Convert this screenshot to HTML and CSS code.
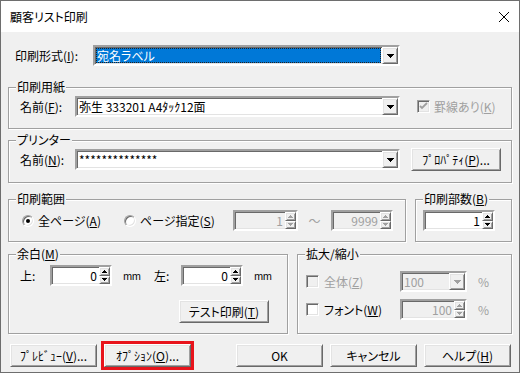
FILE: index.html
```html
<!DOCTYPE html>
<html lang="ja">
<head>
    <meta charset="UTF-8">
    <meta name="viewport" content="width=device-width, initial-scale=1.0">
    <title>顧客リスト印刷</title>
    <link rel="stylesheet" href="styles.css">
</head>
<body>
<div class="window">
    <!-- タイトルバー -->
    <div class="titlebar">
        <span class="title">顧客リスト印刷</span>
        <span class="close">
            <svg width="10" height="10" viewBox="0 0 10 10"><path d="M0 0L10 10M10 0L0 10" stroke="#000" stroke-width="1"/></svg>
        </span>
    </div>

    <div class="content">
        <!-- 印刷形式 -->
        <div class="top-row">
            <span class="form-label">印刷形式(<u>I</u>):</span>
            <div class="field combo combo-format">
                <span class="combo-text selected">宛名ラベル</span>
                <span class="raised drop-btn"><svg width="7" height="4" viewBox="0 0 7 4"><path d="M0 0h7v1h-1v1h-1v1h-1v1h-1v-1h-1v-1h-1v-1h-1z"/></svg></span>
            </div>
        </div>

        <!-- 印刷用紙 -->
        <div class="group group-paper">
            <div class="group-title">印刷用紙</div>
            <div class="group-row paper-row">
                <span class="name-label">名前(<u>F</u>):</span>
                <div class="field combo combo-name">
                    <span class="combo-text">弥生 333201 A4ﾀｯｸ12面</span>
                    <span class="raised drop-btn"><svg width="7" height="4" viewBox="0 0 7 4"><path d="M0 0h7v1h-1v1h-1v1h-1v1h-1v-1h-1v-1h-1v-1h-1z"/></svg></span>
                </div>
                <span class="check-item disabled ruled">
                    <span class="checkbox"><svg width="9" height="9" viewBox="0 0 9 9"><path d="M1 4l2 2l5 -5" fill="none" stroke="#a0a0a0" stroke-width="1.8"/></svg></span>
                    罫線あり(<u>K</u>)
                </span>
            </div>
        </div>

        <!-- プリンター -->
        <div class="group group-printer">
            <div class="group-title">プリンター</div>
            <div class="group-row printer-row">
                <span class="name-label">名前(<u>N</u>):</span>
                <div class="field combo combo-name">
                    <span class="combo-text">**************</span>
                    <span class="raised drop-btn"><svg width="7" height="4" viewBox="0 0 7 4"><path d="M0 0h7v1h-1v1h-1v1h-1v1h-1v-1h-1v-1h-1v-1h-1z"/></svg></span>
                </div>
                <span class="raised btn btn-property">ﾌﾟﾛﾊﾟﾃｨ(<u>P</u>)...</span>
            </div>
        </div>

        <!-- 印刷範囲 / 印刷部数 -->
        <div class="group-line range-line">
            <div class="group group-range">
                <div class="group-title">印刷範囲</div>
                <div class="group-row range-row">
                    <span class="radio-item radio-all"><span class="radio on"></span>全ページ(<u>A</u>)</span>
                    <span class="radio-item radio-page"><span class="radio"></span>ページ指定(<u>S</u>)</span>
                    <div class="field spin disabled spin-from">
                        <span class="spin-text">1</span>
                        <span class="spin-btns">
                            <span class="raised spin-btn"><svg width="5" height="3" viewBox="0 0 5 3"><path d="M2 0h1v1h1v1h1v1h-5v-1h1v-1h1z"/></svg></span>
                            <span class="raised spin-btn"><svg width="5" height="3" viewBox="0 0 5 3"><path d="M0 0h5v1h-1v1h-1v1h-1v-1h-1v-1h-1z"/></svg></span>
                        </span>
                    </div>
                    <span class="tilde">〜</span>
                    <div class="field spin disabled spin-to">
                        <span class="spin-text">9999</span>
                        <span class="spin-btns">
                            <span class="raised spin-btn"><svg width="5" height="3" viewBox="0 0 5 3"><path d="M2 0h1v1h1v1h1v1h-5v-1h1v-1h1z"/></svg></span>
                            <span class="raised spin-btn"><svg width="5" height="3" viewBox="0 0 5 3"><path d="M0 0h5v1h-1v1h-1v1h-1v-1h-1v-1h-1z"/></svg></span>
                        </span>
                    </div>
                </div>
            </div>
            <div class="group group-copies">
                <div class="group-title">印刷部数(<u>B</u>)</div>
                <div class="group-row copies-row">
                    <div class="field spin spin-copies">
                        <span class="spin-text">1</span>
                        <span class="spin-btns">
                            <span class="raised spin-btn"><svg width="5" height="3" viewBox="0 0 5 3"><path d="M2 0h1v1h1v1h1v1h-5v-1h1v-1h1z"/></svg></span>
                            <span class="raised spin-btn"><svg width="5" height="3" viewBox="0 0 5 3"><path d="M0 0h5v1h-1v1h-1v1h-1v-1h-1v-1h-1z"/></svg></span>
                        </span>
                    </div>
                </div>
            </div>
        </div>

        <!-- 余白 / 拡大縮小 -->
        <div class="group-line margin-line">
            <div class="group group-margin">
                <div class="group-title">余白(<u>M</u>)</div>
                <div class="group-row margin-row">
                    <span class="side-label top-label">上:</span>
                    <div class="field spin spin-margin">
                        <span class="spin-text">0</span>
                        <span class="spin-btns">
                            <span class="raised spin-btn"><svg width="5" height="3" viewBox="0 0 5 3"><path d="M2 0h1v1h1v1h1v1h-5v-1h1v-1h1z"/></svg></span>
                            <span class="raised spin-btn"><svg width="5" height="3" viewBox="0 0 5 3"><path d="M0 0h5v1h-1v1h-1v1h-1v-1h-1v-1h-1z"/></svg></span>
                        </span>
                    </div>
                    <span class="unit">mm</span>
                    <span class="side-label left-label">左:</span>
                    <div class="field spin spin-margin">
                        <span class="spin-text">0</span>
                        <span class="spin-btns">
                            <span class="raised spin-btn"><svg width="5" height="3" viewBox="0 0 5 3"><path d="M2 0h1v1h1v1h1v1h-5v-1h1v-1h1z"/></svg></span>
                            <span class="raised spin-btn"><svg width="5" height="3" viewBox="0 0 5 3"><path d="M0 0h5v1h-1v1h-1v1h-1v-1h-1v-1h-1z"/></svg></span>
                        </span>
                    </div>
                    <span class="unit">mm</span>
                </div>
                <span class="raised btn btn-test">テスト印刷(<u>T</u>)</span>
            </div>
            <div class="group group-scale">
                <div class="group-title">拡大/縮小</div>
                <div class="group-row scale-row">
                    <span class="check-item disabled scale-check"><span class="checkbox"></span>全体(<u>Z</u>)</span>
                    <div class="field combo disabled combo-scale">
                        <span class="combo-text">100</span>
                        <span class="raised drop-btn"><svg width="7" height="4" viewBox="0 0 7 4"><path d="M0 0h7v1h-1v1h-1v1h-1v1h-1v-1h-1v-1h-1v-1h-1z"/></svg></span>
                    </div>
                    <span class="percent">%</span>
                </div>
                <div class="group-row scale-row font-row">
                    <span class="check-item scale-check"><span class="checkbox"></span>フォント(<u>W</u>)</span>
                    <div class="field spin disabled spin-scale">
                        <span class="spin-text">100</span>
                        <span class="spin-btns">
                            <span class="raised spin-btn"><svg width="5" height="3" viewBox="0 0 5 3"><path d="M2 0h1v1h1v1h1v1h-5v-1h1v-1h1z"/></svg></span>
                            <span class="raised spin-btn"><svg width="5" height="3" viewBox="0 0 5 3"><path d="M0 0h5v1h-1v1h-1v1h-1v-1h-1v-1h-1z"/></svg></span>
                        </span>
                    </div>
                    <span class="percent">%</span>
                </div>
            </div>
        </div>

        <!-- ボタン -->
        <div class="button-bar">
            <span class="raised btn">ﾌﾟﾚﾋﾞｭｰ(<u>V</u>)...</span>
            <span class="raised btn btn-option">ｵﾌﾟｼｮﾝ(<u>O</u>)...</span>
            <span class="raised btn btn-ok">OK</span>
            <span class="raised btn">キャンセル</span>
            <span class="raised btn">ヘルプ(<u>H</u>)</span>
        </div>
    </div>
</div>
</body>
</html>
```

FILE: styles.css
```css
/* 基本スタイル */
* {
    box-sizing: border-box;
}

body {
    margin: 0;
    font-family: "Noto Sans CJK JP", "Noto Sans", sans-serif;
    font-size: 12px;
    line-height: 14px;
    color: #000;
    font-feature-settings: "palt";
    background: #fff;
}

u {
    text-decoration: underline;
    text-underline-offset: 1px;
}

.window {
    width: 520px;
    height: 373px;
    border: 1px solid #6e6e6e;
    background: #f0f0f0;
    display: flex;
    flex-direction: column;
}

/* タイトルバー */
.titlebar {
    height: 31px;
    flex-shrink: 0;
    background: #fff;
    display: flex;
    align-items: center;
    padding-left: 9px;
}

.close {
    margin-left: auto;
    width: 30px;
    height: 31px;
    display: flex;
    align-items: center;
    justify-content: center;
}

.content {
    padding: 13px 7px 0;
}

/* 3D 枠 */
.raised {
    background: #f0f0f0;
    border: 1px solid;
    border-color: #fff #696969 #696969 #fff;
    box-shadow: inset 1px 1px #e3e3e3, inset -1px -1px #a0a0a0;
}

.field {
    height: 21px;
    background: #fff;
    border: 2px solid;
    border-color: #a0a0a0 #fff #fff #a0a0a0;
    box-shadow: inset 1px 1px #696969, inset -1px -1px #e3e3e3;
    display: flex;
    align-items: stretch;
    flex-shrink: 0;
}

.field.disabled {
    background: #f0f0f0;
    color: #a0a0a0;
}

.field.disabled svg {
    fill: #a0a0a0;
}

/* コンボボックス */
.combo-text {
    flex: 1;
    display: flex;
    align-items: center;
    padding-left: 2px;
    white-space: nowrap;
    overflow: hidden;
}

.combo-text.selected {
    margin: 1px;
    padding-left: 1px;
    background: #0078d7;
    color: #fff;
    outline: 1px dotted #222;
    outline-offset: -1px;
}

.drop-btn {
    width: 16px;
    display: flex;
    align-items: center;
    justify-content: center;
}

/* スピン */
.spin-text {
    flex: 1;
    display: flex;
    align-items: center;
    justify-content: flex-end;
    padding-right: 2px;
}

.spin-btns {
    width: 11px;
    display: flex;
    flex-direction: column;
}

.spin-btn {
    flex: 1;
    display: flex;
    align-items: center;
    justify-content: center;
}

/* ボタン */
.btn {
    height: 23px;
    width: 87px;
    display: flex;
    align-items: center;
    justify-content: center;
    white-space: nowrap;
    flex-shrink: 0;
}

/* チェックボックス・ラジオ */
.check-item {
    display: flex;
    align-items: center;
    white-space: nowrap;
}

.check-item.disabled {
    color: #a0a0a0;
}

.checkbox {
    width: 13px;
    height: 13px;
    margin-right: 5px;
    background: #fff;
    border: 1px solid;
    border-color: #a0a0a0 #fff #fff #a0a0a0;
    box-shadow: inset 1px 1px #696969, inset -1px -1px #e3e3e3;
    display: flex;
    align-items: center;
    justify-content: center;
}

.check-item.disabled .checkbox {
    background: #f0f0f0;
}

.radio-item {
    display: flex;
    align-items: center;
    white-space: nowrap;
}

.radio {
    width: 12px;
    height: 12px;
    margin-right: 4px;
    border-radius: 50%;
    background: #fff;
    border: 1px solid;
    border-color: #a0a0a0 #fff #fff #a0a0a0;
    box-shadow: inset 1px 1px #696969, inset -1px -1px #e3e3e3;
    display: flex;
    align-items: center;
    justify-content: center;
}

.radio.on::after {
    content: "";
    width: 4px;
    height: 4px;
    border-radius: 50%;
    background: #000;
}

/* 上段 */
.top-row {
    display: flex;
    align-items: center;
    padding-left: 7px;
}

.form-label {
    width: 78px;
}

.combo-format {
    width: 307px;
}

/* グループボックス */
.group {
    border: 1px solid #a0a0a0;
    box-shadow: inset 1px 1px #fff, 1px 1px #fff;
    flex-shrink: 0;
}

.group-title {
    display: table;
    height: 14px;
    margin: -8px 0 0 7px;
    padding: 0 1px;
    background: #f0f0f0;
    white-space: nowrap;
}

.group-row {
    display: flex;
    align-items: center;
}

.group-paper {
    margin-top: 21px;
    height: 42px;
}

.paper-row {
    margin-top: 2px;
    height: 21px;
    padding-left: 11px;
}

.name-label {
    width: 55px;
}

.combo-name {
    width: 325px;
}

.ruled {
    margin-left: 17px;
}

.ruled .checkbox {
    margin-right: 4px;
}

.group-printer {
    margin-top: 11px;
    height: 43px;
}

.printer-row {
    margin-top: 1px;
    height: 23px;
    padding-left: 11px;
}

.btn-property {
    width: 90px;
    margin-left: 11px;
}

/* 印刷範囲・部数 */
.group-line {
    display: flex;
    gap: 9px;
}

.range-line {
    margin-top: 16px;
}

.range-line .group {
    height: 43px;
}

.group-range {
    width: 398px;
}

.range-row {
    margin-top: 4px;
    height: 21px;
    padding-left: 13px;
}

.radio-all {
    width: 102px;
}

.radio-page {
    width: 109px;
}

.spin-from {
    width: 65px;
}

.tilde {
    width: 33px;
    text-align: center;
    color: #a0a0a0;
}

.spin-to {
    width: 62px;
}

.group-copies {
    width: 97px;
}

.copies-row {
    margin-top: 4px;
    height: 21px;
    padding-left: 7px;
}

.spin-copies {
    width: 72px;
}

/* 余白・拡大縮小 */
.margin-line {
    margin-top: 12px;
}

.margin-line .group {
    height: 80px;
}

.group-margin {
    width: 280px;
}

.margin-row {
    margin-top: 4px;
    height: 21px;
    padding-left: 11px;
}

.top-label {
    width: 30px;
}

.spin-margin {
    width: 62px;
}

.spin-margin + .unit {
    margin-left: 11px;
}

.unit {
    width: 31px;
    font-size: 10px;
    letter-spacing: -0.4px;
}

.left-label {
    width: 27px;
}

.btn-test {
    width: 90px;
    margin: 14px 0 0 170px;
}

.group-scale {
    width: 215px;
}

.scale-row {
    margin-top: 10px;
    height: 21px;
    padding-left: 8px;
}

.font-row {
    margin-top: 7px;
}

.scale-check {
    width: 94px;
}

.combo-scale,
.spin-scale {
    width: 67px;
}

.percent {
    margin-left: 11px;
    color: #a0a0a0;
}

/* 下段ボタン */
.button-bar {
    display: flex;
    gap: 7px;
    margin-top: 10px;
    padding: 0 1px 0 2px;
}

.btn-option {
    outline: 3px solid #e8141c;
}

.btn-ok {
    margin-left: auto;
}
```
